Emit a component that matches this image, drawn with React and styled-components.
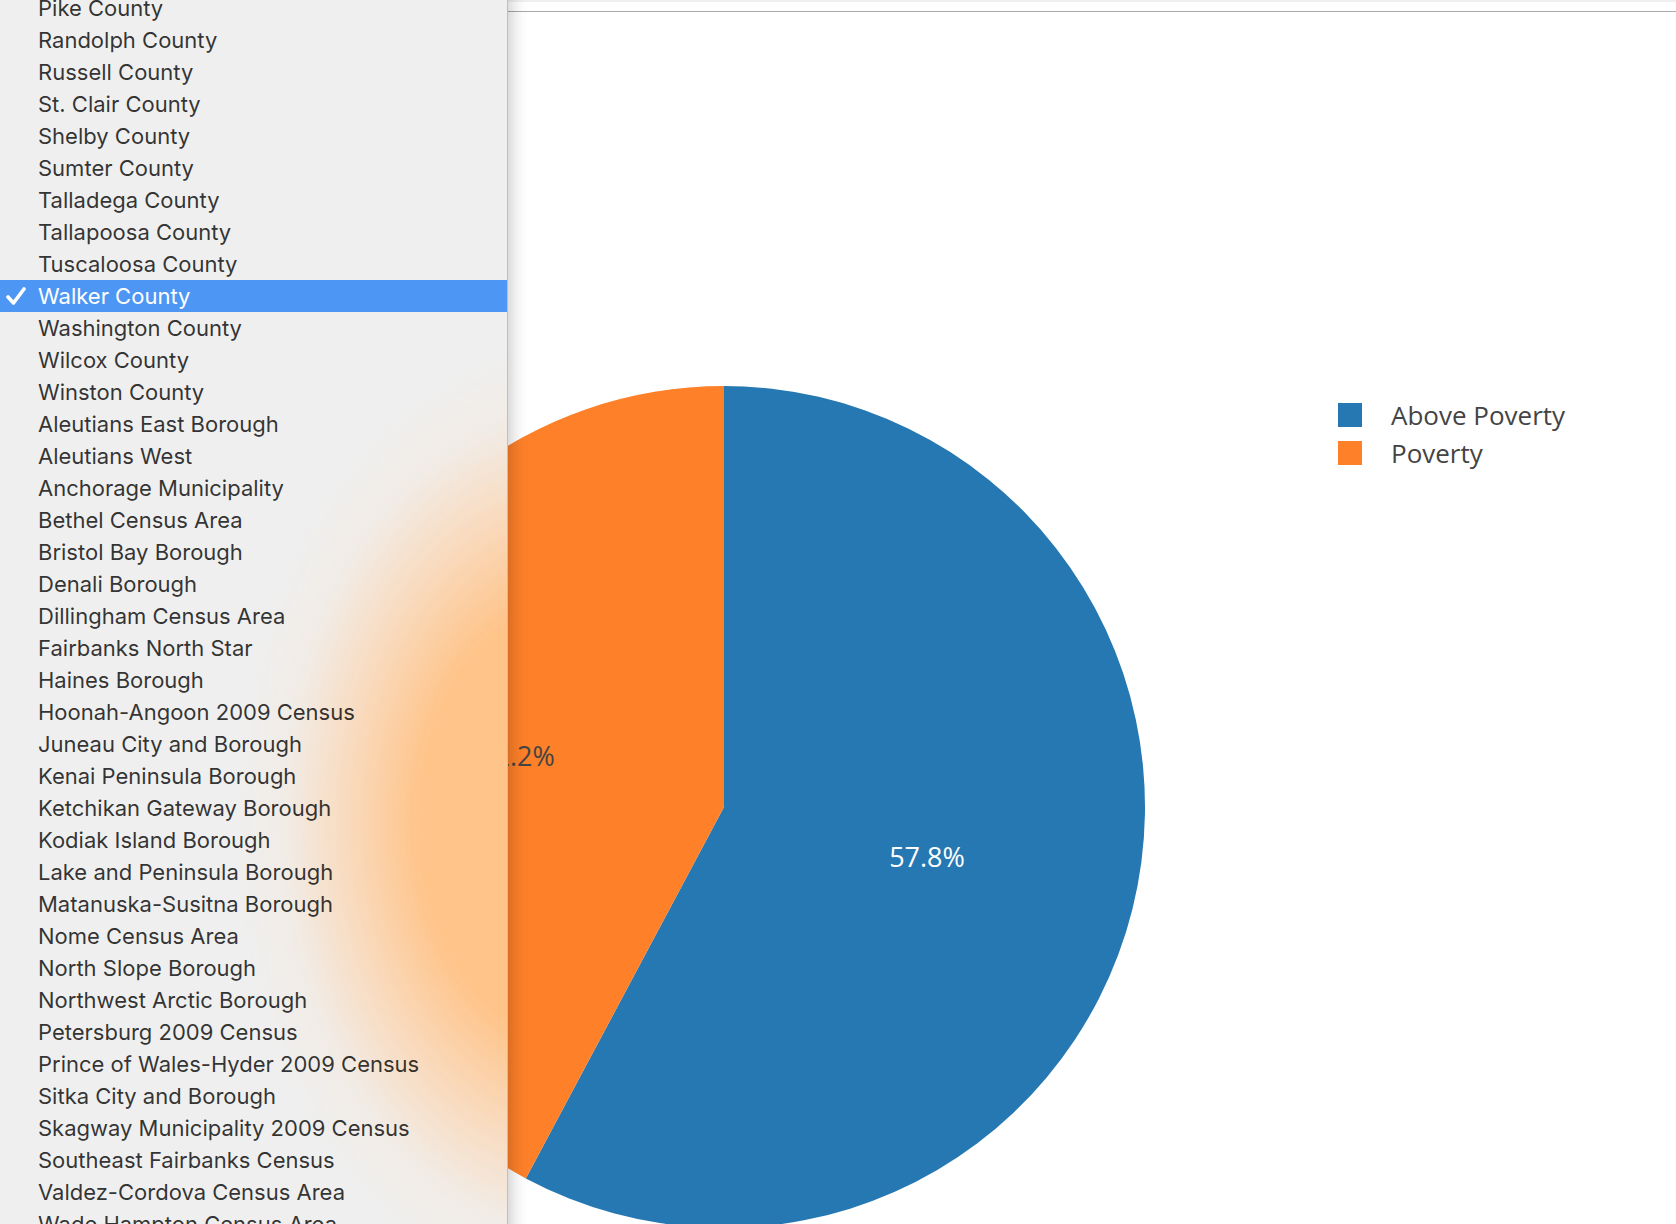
import styled, { createGlobalStyle } from "styled-components";

const GlobalStyle = createGlobalStyle`
  html, body {
    margin: 0;
    padding: 0;
    background: #ffffff;
    overflow: hidden;
  }
`;

const counties = [
  "Pike County",
  "Randolph County",
  "Russell County",
  "St. Clair County",
  "Shelby County",
  "Sumter County",
  "Talladega County",
  "Tallapoosa County",
  "Tuscaloosa County",
  "Walker County",
  "Washington County",
  "Wilcox County",
  "Winston County",
  "Aleutians East Borough",
  "Aleutians West",
  "Anchorage Municipality",
  "Bethel Census Area",
  "Bristol Bay Borough",
  "Denali Borough",
  "Dillingham Census Area",
  "Fairbanks North Star",
  "Haines Borough",
  "Hoonah-Angoon 2009 Census",
  "Juneau City and Borough",
  "Kenai Peninsula Borough",
  "Ketchikan Gateway Borough",
  "Kodiak Island Borough",
  "Lake and Peninsula Borough",
  "Matanuska-Susitna Borough",
  "Nome Census Area",
  "North Slope Borough",
  "Northwest Arctic Borough",
  "Petersburg 2009 Census",
  "Prince of Wales-Hyder 2009 Census",
  "Sitka City and Borough",
  "Skagway Municipality 2009 Census",
  "Southeast Fairbanks Census",
  "Valdez-Cordova Census Area",
  "Wade Hampton Census Area",
];

const slices = [
  { label: "Above Poverty", value: 57.8, color: "#2678b2" },
  { label: "Poverty", value: 42.2, color: "#fe8029" },
];

const Page = styled.div`
  position: relative;
  width: 1676px;
  height: 1224px;
  overflow: hidden;
  background: #ffffff;
`;

const TopBar = styled.div`
  height: 9px;
  border-top: 2px solid #efefef;
  border-bottom: 1px solid #a9a9a9;
  background: #ffffff;
`;

const Plot = styled.div`
  display: flex;
  align-items: flex-start;
  padding-left: 303px;
`;

const PieSvg = styled.svg`
  flex: none;
  margin-top: 374px;
  overflow: visible;
`;

const SliceText = styled.text`
  font-family: "Open Sans", "Liberation Sans", sans-serif;
  font-size: 27px;
`;

const Legend = styled.ul`
  list-style: none;
  margin: 391px 0 0 193px;
  padding: 0;
  display: flex;
  flex-direction: column;
  gap: 14px;
`;

const LegendItem = styled.li`
  display: flex;
  align-items: center;
  height: 24px;
  gap: 29px;
  font-family: "Open Sans", "Liberation Sans", sans-serif;
  font-size: 26px;
  color: #444444;
`;

const Swatch = styled.span`
  width: 24px;
  height: 24px;
  background: ${(p) => p.$color};
`;

/* native select popup, with the orange slice glowing through it */
const Menu = styled.ul`
  position: absolute;
  left: 0;
  top: -8px;
  width: 507px;
  margin: 0;
  padding: 0;
  list-style: none;
  border-right: 1px solid rgba(0, 0, 0, 0.2);
  background:
    radial-gradient(
      ellipse 340px 480px at 575px 830px,
      rgba(255, 196, 138, 1) 0%,
      rgba(255, 196, 138, 1) 46%,
      rgba(255, 206, 160, 0.6) 68%,
      rgba(248, 226, 204, 0.28) 85%,
      rgba(240, 240, 240, 0) 100%
    ),
    #efefef;
  box-shadow: 3px 0 16px rgba(0, 0, 0, 0.22);
  font-family: Inter, "Noto Sans", sans-serif;
  font-size: 22px;
`;

const Row = styled.li`
  display: flex;
  align-items: center;
  height: 32px;
  white-space: nowrap;
  color: ${(p) => (p.$selected ? "#ffffff" : "rgba(0, 0, 0, 0.8)")};
  background: ${(p) => (p.$selected ? "#4e96f4" : "transparent")};
`;

const CheckSlot = styled.span`
  display: flex;
  align-items: center;
  width: 32px;
  padding-left: 6px;
  flex: none;
`;

function Check() {
  return (
    <svg width="20" height="18" viewBox="0 0 20 18">
      <polyline
        points="2,10 7.5,16 18,2"
        fill="none"
        stroke="#ffffff"
        strokeWidth="3.6"
        strokeLinecap="round"
        strokeLinejoin="round"
      />
    </svg>
  );
}

function Pie() {
  const r = 421;
  const c = 421;
  let start = 0;
  const parts = slices.map((s) => {
    const a0 = (start / 100) * Math.PI * 2;
    start += s.value;
    const a1 = (start / 100) * Math.PI * 2;
    const x0 = c + r * Math.sin(a0);
    const y0 = c - r * Math.cos(a0);
    const x1 = c + r * Math.sin(a1);
    const y1 = c - r * Math.cos(a1);
    const large = a1 - a0 > Math.PI ? 1 : 0;
    const d = `M${c},${c} L${x0},${y0} A${r},${r} 0 ${large} 1 ${x1},${y1} Z`;
    return { ...s, d };
  });
  return (
    <PieSvg width="842" height="842" viewBox="0 0 842 842">
      {parts.map((p) => (
        <path key={p.label} d={p.d} fill={p.color} />
      ))}
      <SliceText x="624" y="481" fill="#ffffff" textAnchor="middle">
        57.8%
      </SliceText>
      <SliceText x="214" y="380" fill="#444444" textAnchor="middle">
        42.2%
      </SliceText>
    </PieSvg>
  );
}

export default function App() {
  return (
    <>
      <GlobalStyle />
      <Page>
        <TopBar />
        <Plot>
          <Pie />
          <Legend>
            {slices.map((s) => (
              <LegendItem key={s.label}>
                <Swatch $color={s.color} />
                {s.label}
              </LegendItem>
            ))}
          </Legend>
        </Plot>
        <Menu>
          {counties.map((name) => {
            const selected = name === "Walker County";
            return (
              <Row key={name} $selected={selected}>
                <CheckSlot>{selected && <Check />}</CheckSlot>
                {name}
              </Row>
            );
          })}
        </Menu>
      </Page>
    </>
  );
}
